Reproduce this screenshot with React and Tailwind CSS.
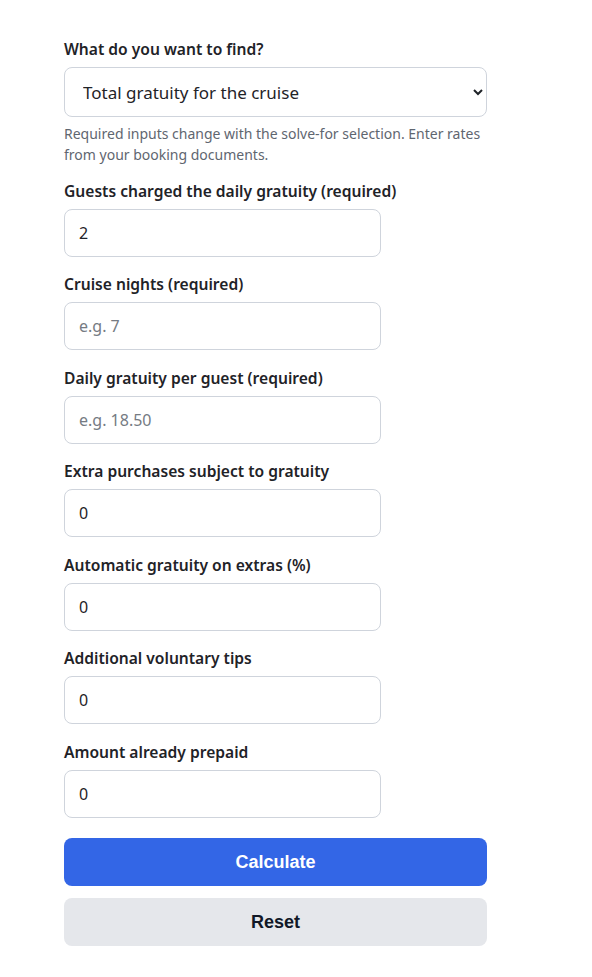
import { useState } from "react";

const fields = [
  { id: "guests", label: "Guests charged the daily gratuity (required)", value: "2", placeholder: "" },
  { id: "nights", label: "Cruise nights (required)", value: "", placeholder: "e.g. 7" },
  { id: "daily", label: "Daily gratuity per guest (required)", value: "", placeholder: "e.g. 18.50" },
  { id: "extras", label: "Extra purchases subject to gratuity", value: "0", placeholder: "" },
  { id: "autoPct", label: "Automatic gratuity on extras (%)", value: "0", placeholder: "" },
  { id: "tips", label: "Additional voluntary tips", value: "0", placeholder: "" },
  { id: "prepaid", label: "Amount already prepaid", value: "0", placeholder: "" },
];

export default function App() {
  const [values, setValues] = useState(
    Object.fromEntries(fields.map((f) => [f.id, f.value]))
  );
  const [solveFor, setSolveFor] = useState("total");

  const reset = () => setValues(Object.fromEntries(fields.map((f) => [f.id, f.value])));

  return (
    <div
      className="min-h-screen bg-white text-[#1f2328]"
      style={{ fontFamily: "'Segoe UI', 'Noto Sans', sans-serif" }}
    >
      <div className="w-[423px] ml-16 pt-[37px] pb-8">
        {/* Solve for */}
        <label htmlFor="solve" className="block text-[15.6px] leading-6 font-semibold mb-1.5">
          What do you want to find?
        </label>
        <select
          id="solve"
          value={solveFor}
          onChange={(e) => setSolveFor(e.target.value)}
          className="w-full h-[50px] rounded-lg border border-[#cfd4dc] bg-white pl-[14px] pr-3 text-[17px] text-[#1f2328]"
        >
          <option value="total">Total gratuity for the cruise</option>
          <option value="daily">Daily gratuity per guest</option>
          <option value="nights">Cruise nights</option>
        </select>
        <p className="mt-1.5 text-sm leading-[21px] text-[#5f6670]">
          Required inputs change with the solve-for selection. Enter rates from your booking documents.
        </p>

        {fields.map((f, i) => (
          <div key={f.id} className={i === 0 ? "mt-[13.5px]" : "mt-[15.5px]"}>
            <label htmlFor={f.id} className="block text-[15.6px] leading-6 font-semibold mb-1.5">
              {f.label}
            </label>
            <input
              id={f.id}
              type="text"
              inputMode="decimal"
              value={values[f.id]}
              placeholder={f.placeholder}
              onChange={(e) => setValues({ ...values, [f.id]: e.target.value })}
              className="block w-[317px] h-12 rounded-lg border border-[#cfd4dc] bg-white px-[14px] text-base text-[#1f2328] placeholder:text-[#757b83] outline-none"
            />
          </div>
        ))}

        <button
          className="mt-5 w-full h-12 rounded-lg bg-[#3366e6] text-white text-lg font-bold"
          style={{ fontFamily: "'Liberation Sans', Arial, sans-serif" }}
        >
          Calculate
        </button>
        <button
          onClick={reset}
          className="mt-3 w-full h-12 rounded-lg bg-[#e5e7eb] text-[#111827] text-lg font-bold"
          style={{ fontFamily: "'Liberation Sans', Arial, sans-serif" }}
        >
          Reset
        </button>
      </div>
    </div>
  );
}
